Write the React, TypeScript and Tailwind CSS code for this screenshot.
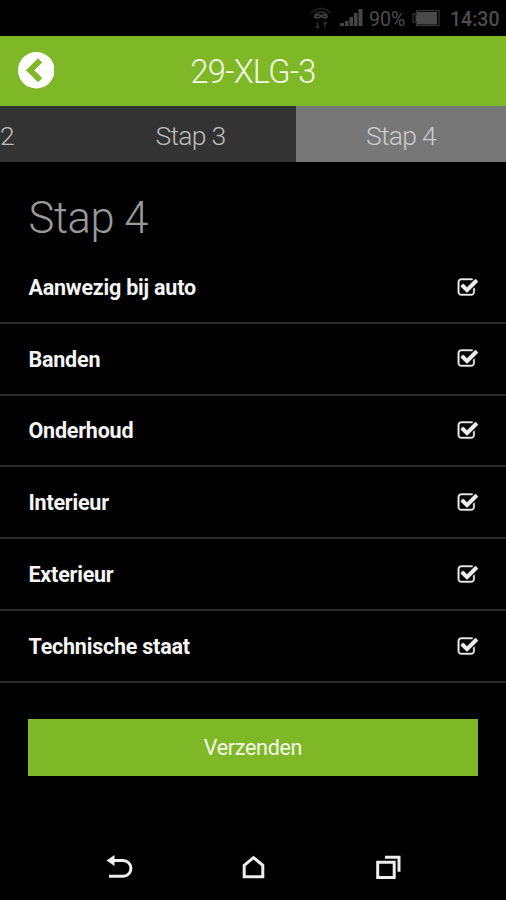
const rows = ["Aanwezig bij auto", "Banden", "Onderhoud", "Interieur", "Exterieur", "Technische staat"];

function CheckIcon() {
  return (
    <svg viewBox="0 0 1792 1792" className="mt-px h-[21.6px] w-[21.6px] fill-[#eeeeee]" stroke="#eeeeee" strokeWidth="30">
      <path d="M1472 930v318q0 119-84.5 203.5t-203.5 84.5h-832q-119 0-203.5-84.5t-84.5-203.5v-832q0-119 84.5-203.5t203.5-84.5h832q63 0 117 25 15 7 18 23 3 17-9 29l-49 49q-10 10-23 10-3 0-9-2-23-6-45-6h-832q-66 0-113 47t-47 113v832q0 66 47 113t113 47h832q66 0 113-47t47-113v-254q0-13 9-22l64-64q10-10 23-10 6 0 12 3 20 8 20 29zm231-489l-814 814q-24 24-57 24t-57-24l-430-430q-24-24-24-57t24-57l110-110q24-24 57-24t57 24l263 263 647-647q24-24 57-24t57 24l110 110q24 24 24 57t-24 57z" />
    </svg>
  );
}

function StatusBar() {
  return (
    <div className="flex h-9 items-center justify-end pr-[6px] text-[19.5px] leading-none text-[#4d4d4d]">
      <svg viewBox="0 0 24 24" className="mr-[6px] h-6 w-6" fill="none" stroke="#303030" strokeWidth="1.5">
        <path d="M1 7Q11-2 21 7" stroke="#222222" />
        <path d="M4 9Q11 3 18 9" />
        <path d="M4.500 11Q8 7 11 10Q14 13 17.500 11M4.500 11Q8 13 11 10Q14 7 17.500 11" stroke="#484848" />
        <path d="M7.500 16v6m-2-2 2 2 2-2M15 22v-6m-2 2 2-2 2 2" stroke="#2a2a2a" />
      </svg>
      <svg viewBox="0 0 24 20" className="mr-[5px] h-5 w-6 fill-[#464646]">
        <path d="M0 15h4v3H0zM5 13h3.500v5H5zM9.500 9H13v9H9.500zM14 5h3.500v13H14zM18.500 1h4v17h-4z" />
      </svg>
      <span className="mt-1 w-[39px] whitespace-nowrap">90%</span>
      <svg viewBox="0 0 28 18" className="mr-[10px] ml-[4px] h-[18px] w-7" fill="#4a4a4a">
        <path d="M4.500 1.700h22.500v15H4.500v-3.500H1V5h3.500z" fill="none" stroke="#333333" strokeWidth="1.300" />
        <path d="M5 3h20v12.500H5v-3H3.500V6H5z" />
      </svg>
      <span className="mt-1 w-[50px] whitespace-nowrap font-medium">14:30</span>
    </div>
  );
}

export default function App() {
  return (
    <div className="flex h-[900px] w-[506px] flex-col overflow-hidden bg-black font-['Roboto',sans-serif]">
      <StatusBar />
      <header className="grid h-[70px] shrink-0 grid-cols-[54px_1fr_54px] items-center bg-[#7fb827]">
        <svg viewBox="0 0 36 36" className="-mt-px ml-[17.5px] h-[36.5px] w-[36.5px]">
          <circle cx="18" cy="18" r="18" fill="#fff" />
          <path d="M21.800 8.300 12 18l9.800 9.700" fill="none" stroke="#7fb827" strokeWidth="5.800" />
        </svg>
        <h1 className="pt-[2px] text-center text-[32.5px] leading-none font-light tracking-[-0.75px] text-[#f4fae9]">29-XLG-3</h1>
      </header>
      <nav className="flex h-14 shrink-0 text-[26.5px] leading-[59px] font-light tracking-[-0.7px] text-[#bdbdbd]">
        <div className="w-[85px] bg-[#333333]">2</div>
        <div className="w-[211px] bg-[#333333] text-center">Stap 3</div>
        <div className="w-[210px] bg-[#777777] text-center text-[#cccccc]">Stap 4</div>
      </nav>
      <h2 className="mt-[31px] ml-[28.5px] h-[59px] shrink-0 text-[43.5px] leading-[52px] font-light tracking-[-0.4px] text-[#999999]">Stap 4</h2>
      <main className="flex flex-col">
        {rows.map((label) => (
          <div key={label} className="flex h-[71.8px] items-center justify-between border-b-2 border-[#2b2b2b] pr-[27px] pl-[28.5px]">
            <span className="mt-[2px] text-[21.5px] font-bold tracking-[-0.22px] text-[#f5f5f5]">{label}</span>
            <CheckIcon />
          </div>
        ))}
      </main>
      <button className="mx-[28px] mt-[36px] h-[57px] shrink-0 bg-[#7fb827] pt-[2px] text-[21.5px] tracking-[-0.3px] text-[#f4fae9]">Verzenden</button>
      <footer className="mt-[76px] flex h-[32px] shrink-0 items-center justify-between pr-[102px] pl-[104px]">
        <svg viewBox="0 0 30 30" className="h-[30px] w-[30px]" fill="none" stroke="#eee" strokeWidth="3">
          <path d="M8 7.500h11a7.900 7.900 0 0 1 0 15.800H5" />
          <path d="M2.500 7.500 10.500 2v11z" fill="#eee" stroke="none" />
        </svg>
        <svg viewBox="0 0 30 30" className="h-[30px] w-[30px]" fill="none" stroke="#eee" strokeWidth="3">
          <path d="M5.200 12.300 14.500 4.600l9.300 7.700v11.500H5.200z" />
        </svg>
        <svg viewBox="0 0 30 30" className="h-[30px] w-[30px]" fill="none" stroke="#eee" strokeWidth="3">
          <path d="M3.700 9.200h16.500v15.200H3.700zM11 4.200h14v14.600" />
        </svg>
      </footer>
    </div>
  );
}
